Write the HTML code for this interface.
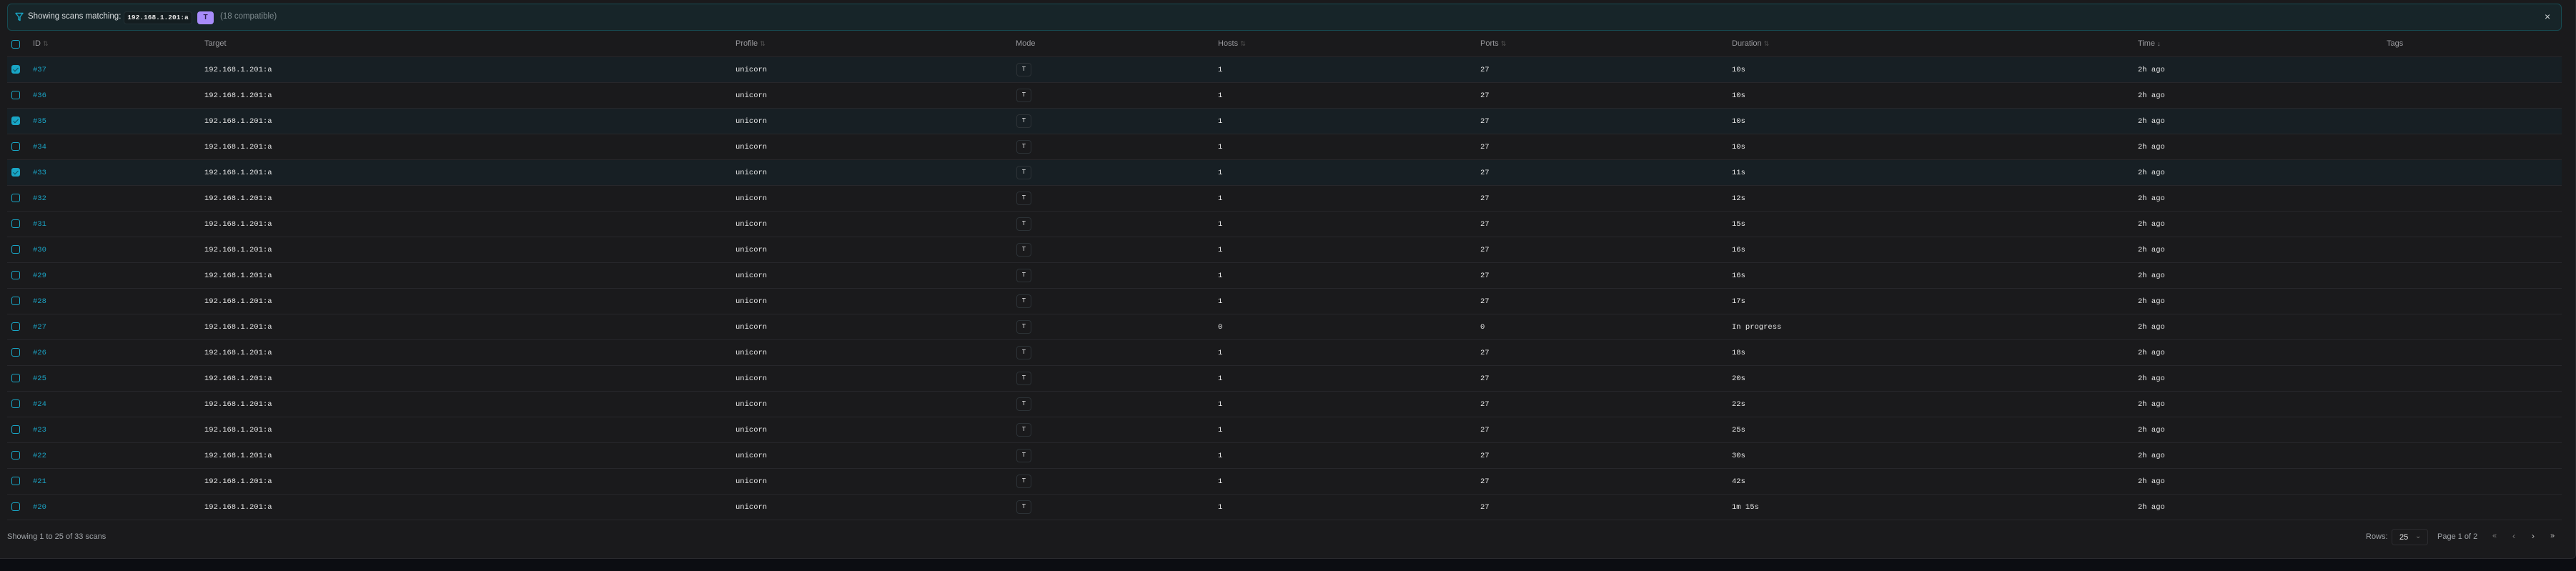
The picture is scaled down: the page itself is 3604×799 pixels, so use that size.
<!DOCTYPE html>
<html><head><meta charset="utf-8"><style>
*{margin:0;padding:0;box-sizing:border-box}
body{width:3604px;height:799px;background:#0c0d12;position:relative;overflow:hidden;font-family:"Liberation Sans",sans-serif}
#panel{position:absolute;left:0;top:0;width:3604px;height:782px;background:#1a1a1c;border-bottom-right-radius:6px;border-bottom:1px solid #2a2a2e;border-right:1px solid #2a2a2e}
.banner{position:absolute;left:10px;top:5px;width:3574px;height:38px;background:#172529;border:1px solid #174a52;border-radius:6px}
.abs{position:absolute;white-space:nowrap}
.mono{font-family:"Liberation Mono",monospace;font-size:10.5px;color:#e6e6e6}
.hd{font-size:11px;color:#9a9a9e}
.row{position:absolute;left:10px;width:3574px;height:36px;border-top:1px solid #27272b}
.row.sel{background:#171f24}
.cb{position:absolute;left:6px;top:11px;width:12px;height:12px;border:1.5px solid #19a6c6;border-radius:3px}
.cb.on{background:#19a6c6}
.cb.on::after{content:"";position:absolute;left:3px;top:1px;width:3px;height:6px;border:solid #0e4c5c;border-width:0 1px 1px 0;transform:rotate(45deg)}
.c{position:absolute;top:0;line-height:36px}
.id{color:#1aa3c4}
.badge{position:absolute;left:1412px;top:8px;width:21px;height:19px;border:1px solid #2c3236;border-radius:4px;text-align:center;line-height:17px;font-family:"Liberation Mono",monospace;font-size:9px;color:#e6e6e6}
</style></head><body>
<div id="panel"></div>
<div class="banner">
<svg class="abs" style="left:10px;top:11px" width="12" height="13" viewBox="0 0 12 13"><path d="M1 1.5h10L7 6.5v5L5 10.5v-4z" fill="none" stroke="#19a6c6" stroke-width="1.4" stroke-linejoin="round"/></svg>
<div class="abs" style="left:28px;top:11px;font-size:11.5px;color:#d8dcde">Showing scans matching:</div>
<div class="abs mono" style="left:162px;top:10px;width:96px;height:18px;border:1px solid #223034;border-radius:4px;background:#141d20;font-weight:bold;font-size:9.5px;text-align:center;line-height:16px">192.168.1.201:a</div>
<div class="abs" style="left:265px;top:10px;width:23px;height:18px;background:#a78bfa;border-radius:4px;text-align:center;line-height:18px;font-size:10px;font-weight:bold;color:#2a1f4a">T</div>
<div class="abs" style="left:297px;top:11px;font-size:11.5px;color:#7e8a8e">(18 compatible)</div>
<div class="abs" style="left:3549px;top:9px;font-size:14px;color:#cfd4d6">×</div>
</div>
<!-- header -->
<div class="abs" style="left:16px;top:56px;width:12px;height:12px;border:1.5px solid #19a6c6;border-radius:3px"></div>
<div class="abs hd" style="left:46px;top:55px">ID <span style="color:#555;font-size:9px">⇅</span></div>
<div class="abs hd" style="left:286px;top:55px">Target</div>
<div class="abs hd" style="left:1029px;top:55px">Profile <span style="color:#555;font-size:9px">⇅</span></div>
<div class="abs hd" style="left:1421px;top:55px">Mode</div>
<div class="abs hd" style="left:1704px;top:55px">Hosts <span style="color:#555;font-size:9px">⇅</span></div>
<div class="abs hd" style="left:2071px;top:55px">Ports <span style="color:#555;font-size:9px">⇅</span></div>
<div class="abs hd" style="left:2423px;top:55px">Duration <span style="color:#555;font-size:9px">⇅</span></div>
<div class="abs hd" style="left:2991px;top:55px">Time <span style="font-size:9px">↓</span></div>
<div class="abs hd" style="left:3339px;top:55px">Tags</div>
<div id="rows"></div>
<div class="row" style="top:727px;height:1px"></div>
<div class="abs" style="left:10px;top:745px;font-size:11px;color:#a0a4a8">Showing 1 to 25 of 33 scans</div>
<div class="abs" style="left:3310px;top:745px;font-size:11px;color:#a0a4a8">Rows:</div>
<div class="abs" style="left:3346px;top:740px;width:51px;height:23px;border:1px solid #2c2c30;border-radius:4px"><span class="abs" style="left:10px;top:5px;font-size:11px;color:#e6e6e6">25</span><span class="abs" style="left:32px;top:4px;font-size:10px;color:#777">⌄</span></div>
<div class="abs" style="left:3410px;top:745px;font-size:11px;color:#a0a4a8">Page 1 of 2</div>
<div class="abs" style="left:3487px;top:744px;font-size:11px;color:#777">«</div>
<div class="abs" style="left:3515px;top:743px;font-size:12px;color:#777">‹</div>
<div class="abs" style="left:3542px;top:743px;font-size:12px;color:#bbb">›</div>
<div class="abs" style="left:3568px;top:744px;font-size:11px;color:#bbb">»</div>
<script>
var d=[[37,'10s',1],[36,'10s',0],[35,'10s',1],[34,'10s',0],[33,'11s',1],[32,'12s',0],[31,'15s',0],[30,'16s',0],[29,'16s',0],[28,'17s',0],[27,'In progress',0],[26,'18s',0],[25,'20s',0],[24,'22s',0],[23,'25s',0],[22,'30s',0],[21,'42s',0],[20,'1m 15s',0]];
var h='';d.forEach(function(r,i){var ip=r[0]==27;
h+='<div class="row'+(r[2]?' sel':'')+'" style="top:'+(79+i*36)+'px"><div class="cb'+(r[2]?' on':'')+'"></div>'+
'<div class="c mono id" style="left:36px">#'+r[0]+'</div>'+
'<div class="c mono" style="left:276px">192.168.1.201:a</div>'+
'<div class="c mono" style="left:1019px">unicorn</div>'+
'<div class="badge">T</div>'+
'<div class="c mono" style="left:1694px">'+(ip?'0':'1')+'</div>'+
'<div class="c mono" style="left:2061px">'+(ip?'0':'27')+'</div>'+
'<div class="c mono" style="left:2413px">'+r[1]+'</div>'+
'<div class="c mono" style="left:2981px">2h ago</div></div>';});
document.getElementById('rows').innerHTML=h;
</script>
</body></html>
